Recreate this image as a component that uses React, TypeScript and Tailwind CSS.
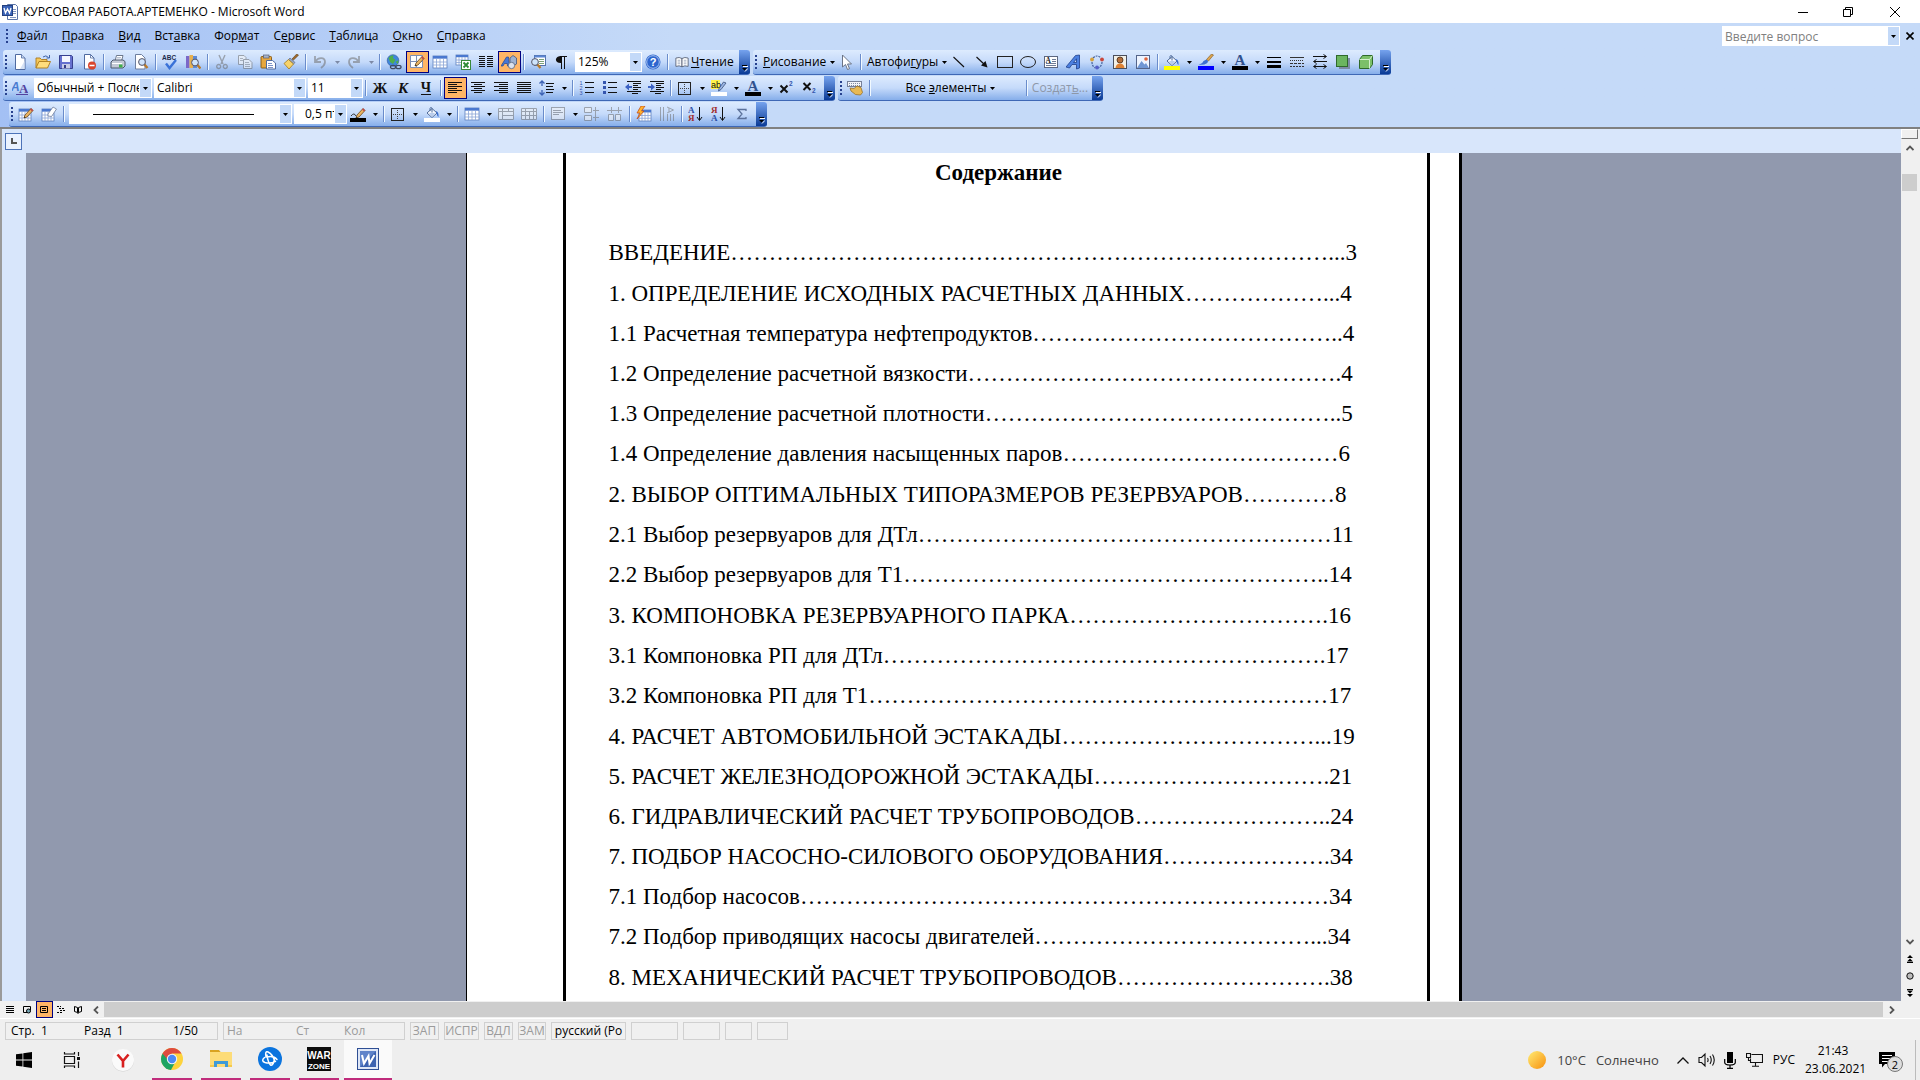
import React from "react";
import type { ReactNode } from "react";

/* ---------- icon primitives ---------- */

function Svg({ children, dim, size = 16 }: { children: ReactNode; dim?: boolean; size?: number }) {
  return (
    <svg width={size} height={size} viewBox="0 0 16 16" fill="none" aria-hidden="true" className={dim ? "shrink-0 opacity-55 grayscale" : "shrink-0"}>
      {children}
    </svg>
  );
}

const Grid = ({ x = 1, y = 2, w = 14, h = 12 }: { x?: number; y?: number; w?: number; h?: number }) => (
  <g>
    <rect x={x} y={y} width={w} height={h} fill="#fff" stroke="#5d7fbd" strokeWidth="0.8" />
    <rect x={x} y={y} width={w} height={h / 4.5} fill="#4a78cf" />
    <path
      d={`M${x} ${y + h * 0.5}h${w}M${x} ${y + h * 0.75}h${w}M${x + w / 4} ${y + 2}v${h - 2}M${x + w / 2} ${y + 2}v${h - 2}M${x + (w * 3) / 4} ${y + 2}v${h - 2}`}
      stroke="#8ba5d6"
      strokeWidth="0.8"
    />
  </g>
);

const Pencil = () => (
  <g>
    <path d="M6 12l1-3 6-6.5 2 2L9 11z" fill="#eab464" stroke="#6b4a1f" strokeWidth="0.8" />
    <path d="M12 3.500l2 2 1.200-1.200-2-2z" fill="#c04a4a" />
    <path d="M6 12l.5-1.500 1 1z" fill="#222" />
  </g>
);

const Lens = ({ x = 9, y = 8 }: { x?: number; y?: number }) => (
  <g>
    <path d={`M${x + 2} ${y + 2}l3.500 4`} stroke="#b87a2a" strokeWidth="2.400" />
    <circle cx={x} cy={y} r="3.400" fill="#cfe4fb" stroke="#556" strokeWidth="1" />
  </g>
);

const Bucket = () => (
  <g>
    <path d="M3 7l5-4.500 5 4.500-5 4.500z" fill="#f4f8ff" stroke="#4e6a98" strokeWidth="1" />
    <path d="M5 7l6 0-3 4z" fill="#b9cdec" />
    <path d="M6 5V2.500q1-2.500 2 0v4" stroke="#4e6a98" strokeWidth="1" />
    <path d="M12 5q3 1 2.500 6-1.500-1-2-4z" fill="#3a6fd0" />
  </g>
);

const I: Record<string, ReactNode> = {
  newDoc: (
    <>
      <path d="M3.500.5h6l3.500 3.500v11.500H3.500z" fill="#fff" stroke="#4f6aa0" strokeWidth="1" />
      <path d="M9.500.5v3.500h3.500" fill="#c7d8f2" stroke="#4f6aa0" strokeWidth="0.8" />
      <path d="M8 15h4.500V7z" fill="#d5e2f6" />
    </>
  ),
  open: (
    <>
      <path d="M1 14V4h4l1.500 1.500H12V8" fill="#f6c85a" stroke="#a9781c" strokeWidth="0.9" />
      <path d="M1 14L4 7.500h11.500L12.500 14z" fill="#ffdd7d" stroke="#a9781c" strokeWidth="0.9" />
      <path d="M8 3q3-2.500 5.500.500M14.500 1v3h-3" stroke="#3f63a8" strokeWidth="1" />
    </>
  ),
  save: (
    <>
      <path d="M1.500 1.500h12l1 1v12h-13z" fill="#6671cf" stroke="#37408f" strokeWidth="1" />
      <rect x="4" y="2" width="8" height="6" fill="#f4f6ff" />
      <rect x="4" y="10" width="8" height="4.500" fill="#c9cde6" />
      <rect x="6" y="11" width="2" height="3" fill="#343c87" />
    </>
  ),
  perm: (
    <>
      <path d="M3.500.5h6l3.500 3.500v11H3.500z" fill="#fff" stroke="#4f6aa0" strokeWidth="1" />
      <path d="M9.500.5v3.500h3.500" stroke="#4f6aa0" strokeWidth="0.8" />
      <circle cx="11" cy="11.500" r="4" fill="#d8452e" />
      <path d="M8.500 11.500h5" stroke="#fff" strokeWidth="1.600" />
    </>
  ),
  print: (
    <>
      <path d="M5 7L6.500 1.500H13L11.500 7z" fill="#fff" stroke="#5f6b80" strokeWidth="0.9" />
      <path d="M1 8l2-2h10l2 1.500V12l-2 2H1z" fill="#c4cad6" stroke="#4d586c" strokeWidth="1" />
      <path d="M2 9.500h10" stroke="#fff" />
      <rect x="9" y="10.500" width="3.500" height="3" fill="#3fae49" />
      <path d="M7 3.500h4M6.600 5h4" stroke="#9aa7bf" strokeWidth="0.7" />
    </>
  ),
  preview: (
    <>
      <path d="M2.500.5h6l3.500 3.500v11H2.500z" fill="#fff" stroke="#6d7f9f" strokeWidth="1" />
      <Lens />
    </>
  ),
  spell: (
    <>
      <text x="0" y="5.500" fontSize="6.500" fontWeight="bold" fontFamily="Liberation Sans" fill="#1d2c4c">ABC</text>
      <path d="M4 9.500l3.500 4.500L14 6" stroke="#3a72d8" strokeWidth="2.400" />
    </>
  ),
  research: (
    <>
      <rect x="1" y="2" width="3.500" height="12" fill="#7b68c8" />
      <rect x="4.500" y="1" width="3.500" height="13" fill="#e6b04f" />
      <rect x="8" y="2" width="4" height="12" fill="#5c8ad6" />
      <Lens x={10} y={8.500} />
    </>
  ),
  cut: <path d="M5 1l4 9M11 1L7 10M5 10.500a2 2 0 1 0 1 3.500 2 2 0 0 0-1-3.500M11 10.500a2 2 0 1 1-1 3.500 2 2 0 0 1 1-3.500" stroke="#5a6f9c" strokeWidth="1.400" />,
  copy: (
    <>
      <path d="M1.500 1.500h5.500l2 2v7H1.500z" fill="#f2f6ff" stroke="#5a6f9c" />
      <path d="M6.500 5.500h5.500l3 3v6H6.500z" fill="#f2f6ff" stroke="#5a6f9c" />
      <path d="M8 8.500h4M8 10.500h5M8 12.500h5M3 4.500h3M3 6.500h3" stroke="#7c8fb8" />
    </>
  ),
  paste: (
    <>
      <rect x="1" y="2.500" width="10.500" height="11.500" rx="0.800" fill="#e6a740" stroke="#85570f" strokeWidth="0.9" />
      <rect x="3.500" y="1" width="5.500" height="3" fill="#a9b3c6" stroke="#55607a" strokeWidth="0.7" />
      <path d="M6.500 6.500h6l3 2.500v6H6.500z" fill="#fff" stroke="#4f6aa0" strokeWidth="1" />
      <path d="M8 9.500h4M8 11.500h5M8 13.500h5" stroke="#7c93c8" />
    </>
  ),
  painter: (
    <>
      <path d="M15.500 1.200L10.500 6l-1.500-1L13.700 0z" fill="#a06a2c" stroke="#5d3c12" strokeWidth="0.6" />
      <path d="M7 4l5 4.500-1.500 1.500-5-4.500z" fill="#9aa8c4" stroke="#4c5a7c" strokeWidth="0.6" />
      <path d="M5.500 5.500l5 4.500L6 15 1 9.500z" fill="#f7d36b" stroke="#a27a1d" strokeWidth="0.8" />
    </>
  ),
  undo: <path d="M3 2v6h6M3.500 7.500C6 3 13 3 13 8c0 3-2 4.500-4 6" stroke="#5673ac" strokeWidth="1.800" />,
  redo: <path d="M13 2v6H7M12.500 7.500C10 3 3 3 3 8c0 3 2 4.500 4 6" stroke="#5673ac" strokeWidth="1.800" />,
  link: (
    <>
      <circle cx="7" cy="6.500" r="5.800" fill="#3f86dc" stroke="#2b5597" strokeWidth="0.6" />
      <path d="M2.500 4q2-3 5-2.800L7 4l2.500 2-2.500 4-3-2zM9.500 8l3-2-.5 4z" fill="#4fae4c" />
      <ellipse cx="7" cy="13" rx="2.600" ry="1.700" stroke="#3e4a62" strokeWidth="1.200" />
      <ellipse cx="12.500" cy="13" rx="2.600" ry="1.700" stroke="#3e4a62" strokeWidth="1.200" />
    </>
  ),
  drawTable: (
    <>
      <path d="M1.500 1.500h12v12h-12zM7.500 1.500v12M1.500 7.500h12" fill="#fff" stroke="#7d8fb5" />
      <Pencil />
    </>
  ),
  grid: <Grid />,
  excel: (
    <>
      <Grid w={12} h={10} y={1} />
      <rect x="6.500" y="6.500" width="9" height="9" fill="#fff" stroke="#3a8a3a" />
      <path d="M8.500 8.500l5 5M13.500 8.500l-5 5" stroke="#2d8a35" strokeWidth="1.800" />
    </>
  ),
  columns: <path d="M1 2.500h6M1 4.500h6M1 6.500h6M1 8.500h6M1 10.500h6M1 12.500h6M9 2.500h6M9 4.500h6M9 6.500h6M9 8.500h6M9 10.500h6M9 12.500h6" stroke="#111" />,
  drawing: (
    <>
      <path d="M9 4l3-2.500L15.500 4v6l-3.500 2-3-2z" fill="#9fb3d3" stroke="#41557d" strokeWidth="0.8" />
      <path d="M0 12L5.500 3h2l1 9H6.500L6.300 9.500H3.500L2 12z" fill="#4777d6" stroke="#24458f" strokeWidth="0.7" />
      <circle cx="10.500" cy="11.500" r="3.200" fill="#dbe2ee" stroke="#56637e" strokeWidth="0.8" />
    </>
  ),
  docMap: (
    <>
      <rect x="4.500" y="1.500" width="11" height="10" fill="#fff" stroke="#5573aa" />
      <rect x="4.500" y="1.500" width="11" height="2" fill="#5a86d4" />
      <path d="M9 5.500h5M9 7.500h5M9 9.500h5" stroke="#7ca27a" />
      <Lens x={5} y={8} />
    </>
  ),
  pilcrow: (
    <>
      <path d="M8.500 15V2.500M11.500 15V2.500M14 2.500H7" stroke="#111" />
      <path d="M8.500 2v7C1 9.500 1 2 8.500 2z" fill="#111" />
    </>
  ),
  help: (
    <>
      <circle cx="8" cy="8" r="7.500" fill="#2d66cf" />
      <circle cx="8" cy="8" r="6.300" stroke="#c9dbf7" strokeWidth="0.800" />
      <text x="8" y="12" textAnchor="middle" fontSize="11" fontWeight="bold" fontFamily="Liberation Sans" fill="#fff">?</text>
    </>
  ),
  book: (
    <>
      <path d="M8 4Q5 2 1 3.500V13q4-1.500 7 .5z" fill="#fff" stroke="#555f75" />
      <path d="M8 4q3-2 7-.5V13q-4-1.500-7 .5z" fill="#fff" stroke="#555f75" />
      <path d="M3 6h3M3 8h3M3 10h3M10 6h3M10 8h3M10 10h3" stroke="#8390aa" strokeWidth="0.8" />
    </>
  ),
  cursor: <path d="M4.500 1v12l3-2.500 2 5 2-.8-2-4.700h4z" fill="#fff" stroke="#6b7486" strokeWidth="1" />,
  line: <path d="M2.500 3L13 13" stroke="#111" strokeWidth="1.100" />,
  arrow: (
    <>
      <path d="M2.500 3L11 11" stroke="#111" strokeWidth="1.100" />
      <path d="M13.500 13.500L11.500 7 7 11.500z" fill="#111" />
    </>
  ),
  rect: <rect x="0.500" y="2.500" width="15" height="11" stroke="#222" />,
  ellipse: <ellipse cx="8" cy="8" rx="7.500" ry="5.500" stroke="#222" />,
  textBox: (
    <>
      <rect x="1.500" y="2.500" width="13" height="11" fill="#fff" stroke="#5c6780" />
      <text x="2.500" y="9" fontSize="7.500" fontWeight="bold" fontFamily="Liberation Serif" fill="#222">A</text>
      <path d="M9 5.500h4M9 7.500h4M3 9.500h10M3 11.500h10" stroke="#6e7c97" />
    </>
  ),
  wordArt: <path d="M0 13L9.500 1.500l4-.5V14l-3 1V10.500H6l-2.500 3.500zM7.500 8.500H10.500V4.800z" fill="#4c80e0" stroke="#1e3f8c" strokeWidth="0.8" fillRule="evenodd" />,
  diagram: (
    <>
      <path d="M4 4q4-4 8 0M13 8q0 4-4 6M3 8q0 4 3 6" stroke="#44619c" strokeWidth="1.200" strokeDasharray="2 1" />
      <circle cx="3" cy="5.500" r="1.900" fill="#d7a13c" />
      <circle cx="13" cy="5.500" r="1.900" fill="#c8473b" />
      <circle cx="8" cy="13.500" r="1.900" fill="#5560c8" />
    </>
  ),
  clipArt: (
    <>
      <rect x="1.500" y="1.500" width="13" height="13" fill="#f3f0e6" stroke="#4b4f5c" />
      <circle cx="8" cy="6" r="3" fill="#b5703c" stroke="#472b15" strokeWidth="0.8" />
      <path d="M3.500 14q.5-4.500 4.500-4.500t4.500 4.500z" fill="#df8233" />
    </>
  ),
  picture: (
    <>
      <rect x="1.500" y="1.500" width="13" height="13" fill="#eef4ff" stroke="#54648a" />
      <path d="M2 14L6.500 7l3 3.500L11 9l3 5z" fill="#6f96d4" />
      <circle cx="11" cy="5" r="1.800" fill="#e0643c" />
    </>
  ),
  bucketYellow: <><Bucket /><rect x="0" y="12" width="16" height="4" fill="#ff0" /></>,
  bucketWhite: <><Bucket /><rect x="0" y="12" width="16" height="4" fill="#fff" /></>,
  brush: (
    <>
      <path d="M15.500 1L10.500 7l-2-1.500L13.500 0z" fill="#dda54e" stroke="#7f581d" strokeWidth="0.6" />
      <path d="M8.500 5.500q3 2 0 4-3 2-8 1 4-1 5-3.500z" fill="#3d6fd0" />
      <rect x="0" y="12" width="16" height="4" fill="#00f" />
    </>
  ),
  fontA: (
    <>
      <text x="8" y="11" textAnchor="middle" fontSize="15" fontWeight="bold" fontFamily="Liberation Serif" fill="#31528f">A</text>
      <rect x="0" y="12" width="16" height="4" fill="#000" />
    </>
  ),
  weights: <path d="M1 3h14v1H1zM1 7h14v2H1zM1 11h14v3H1z" fill="#000" />,
  dashes: (
    <>
      <path d="M1 3.500h14" stroke="#333" />
      <path d="M1 6.500h14" stroke="#333" strokeDasharray="1 1" />
      <path d="M1 9.500h14" stroke="#333" strokeDasharray="3 1" />
      <path d="M1 12.500h14" stroke="#333" strokeDasharray="2 1" />
    </>
  ),
  arrows: <path d="M1 2.500h13M11.500.5l3 2-3 2M15 7.500H2M4.500 5.500l-3 2 3 2M2 12.500h12M4.500 10.500l-3 2 3 2M11.500 10.500l3 2-3 2" stroke="#111" />,
  shadow: (
    <>
      <rect x="4" y="4" width="11" height="11" fill="#7c8aa5" />
      <rect x="1.500" y="1.500" width="11" height="11" fill="#6bb55f" stroke="#2f6a2b" />
    </>
  ),
  cube: (
    <>
      <path d="M1.500 5.500l3-4h10v9l-3 4h-10z" fill="#7cc069" stroke="#2f6a2b" />
      <path d="M1.500 5.500h10v9M11.500 5.500l3-4" stroke="#d5f0cc" />
    </>
  ),
  styles: (
    <>
      <text x="-1" y="11" fontSize="12" fontWeight="bold" fontStyle="italic" fontFamily="Liberation Sans" fill="#4a7bd0">A</text>
      <text x="7" y="13" fontSize="13" fontWeight="bold" fontFamily="Liberation Serif" fill="#52439f">A</text>
      <path d="M4 14.500h12" stroke="#52439f" />
    </>
  ),
  bold: <text x="8" y="13" textAnchor="middle" fontSize="15" fontWeight="bold" fontFamily="Liberation Serif" fill="#111">Ж</text>,
  italic: <text x="8" y="13" textAnchor="middle" fontSize="15" fontWeight="bold" fontStyle="italic" fontFamily="Liberation Serif" fill="#111">К</text>,
  under: (
    <>
      <text x="8" y="12" textAnchor="middle" fontSize="14" fontWeight="bold" fontFamily="Liberation Serif" fill="#111">Ч</text>
      <path d="M3 14.500h10" stroke="#111" />
    </>
  ),
  left: <path d="M1 2.500h14M1 4.500h9M1 6.500h14M1 8.500h9M1 10.500h14M1 12.500h9" stroke="#111" />,
  center: <path d="M1 2.500h14M4 4.500h8M1 6.500h14M4 8.500h8M1 10.500h14M4 12.500h8" stroke="#111" />,
  right: <path d="M1 2.500h14M6 4.500h9M1 6.500h14M6 8.500h9M1 10.500h14M6 12.500h9" stroke="#111" />,
  justify: <path d="M1 2.500h14M1 4.500h14M1 6.500h14M1 8.500h14M1 10.500h14M1 12.500h14" stroke="#111" />,
  spacing: (
    <>
      <path d="M7 3.500h8M7 6.500h7M7 9.500h8M7 12.500h7" stroke="#111" />
      <path d="M3 1v5M3 10v5M.5 3.500L3 1l2.500 2.500M.5 12.500L3 15l2.500-2.500" stroke="#3c62b4" strokeWidth="1.300" />
    </>
  ),
  numbers: (
    <>
      <path d="M6 2.500h9M6 7.500h9M6 12.500h9" stroke="#111" />
      <text x="0.500" y="5" fontSize="5.500" fontFamily="Liberation Sans" fill="#3455ae">1</text>
      <text x="0.500" y="10" fontSize="5.500" fontFamily="Liberation Sans" fill="#3455ae">2</text>
      <text x="0.500" y="15" fontSize="5.500" fontFamily="Liberation Sans" fill="#3455ae">3</text>
    </>
  ),
  bullets: (
    <>
      <path d="M6 2.500h9M6 7.500h9M6 12.500h9" stroke="#111" />
      <path d="M1 1h3v3H1zM1 6h3v3H1zM1 11h3v3H1z" fill="#3455ae" />
    </>
  ),
  outdent: (
    <>
      <path d="M2 1.500h14M8 3.500h8M8 5.500h5M8 7.500h8M8 9.500h5M2 11.500h14M7 13.500h6" stroke="#111" />
      <path d="M0 7l4-3.500v2.500h3v2H4v2.500z" fill="#3c62c4" />
    </>
  ),
  indent: (
    <>
      <path d="M2 1.500h14M8 3.500h8M8 5.500h5M8 7.500h8M8 9.500h5M2 11.500h14M7 13.500h6" stroke="#111" />
      <path d="M7 7L3 3.500v2.500H0v2h3v2.500z" fill="#3c62c4" />
    </>
  ),
  border: (
    <>
      <rect x="1.500" y="2.500" width="12" height="12" stroke="#222" />
      <path d="M7.500 4v10M3 8.500h10" stroke="#444" strokeDasharray="1 1" />
    </>
  ),
  highlight: (
    <>
      <rect x="0" y="0" width="9" height="9" fill="#fff34a" />
      <text x="0" y="8" fontSize="9" fontFamily="Liberation Sans" fill="#111">ab</text>
      <path d="M15 3L10 9.500 7.500 11l.5-2.500L12.500 2z" fill="#9bb6e6" stroke="#3b5079" strokeWidth="0.8" />
      <rect x="0" y="12" width="16" height="4" fill="#fff" />
    </>
  ),
  sup: (
    <>
      <path d="M1.500 5.500l7 7M8.500 5.500l-7 7" stroke="#111" strokeWidth="2" />
      <text x="10" y="5.500" fontSize="6.500" fontWeight="bold" fontFamily="Liberation Sans" fill="#3455ae">2</text>
    </>
  ),
  sub: (
    <>
      <path d="M1.500 3l7 7M8.500 3l-7 7" stroke="#111" strokeWidth="2" />
      <text x="10" y="13" fontSize="6.500" fontWeight="bold" fontFamily="Liberation Sans" fill="#3455ae">2</text>
    </>
  ),
  hand: (
    <>
      <rect x="0.500" y="1.500" width="14" height="5" fill="#f2f4fa" stroke="#76819a" />
      <path d="M2 3.500h11M2 5.500h11" stroke="#66728e" strokeDasharray="1 1" strokeWidth="0.8" />
      <path d="M3 8l4 .5 3-2.500 4 1.500 1.500 5-2 2.500-5-.5L4 11z" fill="#e8b954" stroke="#94671b" strokeWidth="0.7" />
    </>
  ),
  pencilTable: <><Grid y={3} w={12} /><Pencil /></>,
  eraser: (
    <>
      <Grid y={3} w={12} />
      <path d="M7 8l5-7 3.500 2-5 7.500-3.500-.5z" fill="#fff" stroke="#71809e" strokeWidth="0.8" />
    </>
  ),
  penColor: (
    <>
      <path d="M1 10q3-4 5 0" stroke="#333" />
      <Pencil />
      <rect x="0" y="12" width="16" height="4" fill="#000" />
    </>
  ),
  merge: <path d="M.5 2.500h15v11H.5zM.5 5.500h15M4.500 2.500v11M10.500 2.500v3M4.500 9.500h11" fill="#eef3fb" stroke="#5d7298" />,
  split: <path d="M.5 2.500h15v11H.5zM.5 5.500h15M.5 9.500h15M4.500 2.500v11M8.500 5.500v8M12.500 2.500v11" fill="#eef3fb" stroke="#5d7298" />,
  cellAlign: (
    <>
      <rect x="1.500" y="1.500" width="13" height="12" fill="#eef3fb" stroke="#5d7298" />
      <path d="M3 4.500h8M3 6.500h10M3 8.500h6" stroke="#5d7298" />
    </>
  ),
  distRows: <path d="M.5 1.500h7v5h-7zM.5 9.500h7v5h-7zM9 4.500h6M9 11.500h6M11.500 1v14" stroke="#5d7298" fill="#eef3fb" />,
  distCols: <path d="M1.500 8.500h5v6h-5zM8.500 8.500h5v6h-5zM0 4.500h15M4.500 1v6M11.500 1v6" stroke="#5d7298" fill="#eef3fb" />,
  autoFormat: (
    <>
      <Grid x={3} y={4} w={12} h={11} />
      <path d="M5 0L1 7h3l-3 6 7-8H5.500L9 0z" fill="#ffb52e" stroke="#c1440e" strokeWidth="0.7" />
    </>
  ),
  textDir: (
    <>
      <path d="M1.500 1v14M4.500 1v14M8.500 8v7M11.500 8v7M14.500 8v7" stroke="#5d7298" />
      <path d="M8 1l6.500 3L8 7M10 2v4" stroke="#5d7298" />
    </>
  ),
  sortAZ: (
    <>
      <text x="0" y="7" fontSize="9" fontWeight="bold" fontFamily="Liberation Serif" fill="#2c4fa5">А</text>
      <text x="0" y="15" fontSize="9" fontWeight="bold" fontFamily="Liberation Serif" fill="#a32d2d">Я</text>
      <path d="M11.500 1v13M9 11l2.500 3.500L14 11" stroke="#111" />
    </>
  ),
  sortZA: (
    <>
      <text x="0" y="7" fontSize="9" fontWeight="bold" fontFamily="Liberation Serif" fill="#a32d2d">Я</text>
      <text x="0" y="15" fontSize="9" fontWeight="bold" fontFamily="Liberation Serif" fill="#2c4fa5">А</text>
      <path d="M11.500 1v13M9 11l2.500 3.500L14 11" stroke="#111" />
    </>
  ),
  sigma: <path d="M12 5V3.500H4L8 8l-4 4.500h8V11" stroke="#5b719a" strokeWidth="1.300" />,
};

/* ---------- toolbar parts ---------- */

function Btn({ icon, label, on, dim }: { icon: string; label: string; on?: boolean; dim?: boolean }) {
  return (
    <button
      type="button"
      aria-label={label}
      title={label}
      aria-pressed={on}
      className={
        on
          ? "flex h-[22px] w-[23px] shrink-0 items-center border border-[#000080] bg-[#ffb566] pl-[2px]"
          : "flex h-[22px] w-[23px] shrink-0 items-center pl-[3px] hover:bg-[#ffe3b0]"
      }
    >
      <Svg dim={dim}>{I[icon]}</Svg>
    </button>
  );
}

function Caret({ dim }: { dim?: boolean }) {
  return (
    <svg width="5" height="3" viewBox="0 0 5 3" className="shrink-0" aria-hidden="true">
      <path d="M0 0h5L2.500 3z" fill={dim ? "#7d8aa6" : "#000"} />
    </svg>
  );
}

function Drop({ label, dim }: { label: string; dim?: boolean }) {
  return (
    <button type="button" aria-label={label} className="flex h-[22px] w-[11px] shrink-0 items-center justify-center">
      <Caret dim={dim} />
    </button>
  );
}

function Sep() {
  return (
    <span className="flex w-[6px] shrink-0 justify-center">
      <span className="h-4 w-px bg-[#6a8ccb]" />
      <span className="h-4 w-px bg-[#f1f9ff]" />
    </span>
  );
}

function Combo({ label, width, pad = "pl-[2px]", options }: { label: string; width: string; pad?: string; options: string[] }) {
  return (
    <span className={`relative ml-[2px] flex h-5 shrink-0 border border-white bg-white ${width}`}>
      <select
        aria-label={label}
        className={`h-full w-full appearance-none overflow-hidden bg-transparent pr-3 text-[12px] leading-4 outline-none ${pad}`}
      >
        {options.map((o) => (
          <option key={o}>{o}</option>
        ))}
      </select>
      <span className="pointer-events-none absolute inset-y-0 right-0 flex w-[11px] items-center justify-center bg-[#c3d9f8]">
        <Caret />
      </span>
    </span>
  );
}

function Gripper() {
  return (
    <span className="flex w-[6px] shrink-0 flex-col items-center gap-[2px]">
      {[0, 1, 2, 3].map((n) => (
        <span key={n} className="size-[2px] bg-[#27418e]" />
      ))}
    </span>
  );
}

function Toolbar({ name, children, inset }: { name: string; children: ReactNode; inset?: boolean }) {
  return (
    <div
      role="toolbar"
      aria-label={name}
      className={`${inset ? "ml-[6px]" : ""} mr-[3px] flex h-[25px] items-center overflow-hidden rounded-[3px] border-b border-[#3f68b5] bg-linear-to-b from-[#ddebfe] via-[#c5dafa] to-[#86aeea]`}
    >
      <Gripper />
      <div className="flex items-center pr-[2px]">{children}</div>
      <button
        type="button"
        aria-label={`${name}: параметры`}
        className="flex h-full w-[11px] shrink-0 items-end justify-center bg-linear-to-b from-[#76a3ee] to-[#083a96] pb-[2px]"
      >
        <svg width="7" height="7" viewBox="0 0 7 7" aria-hidden="true">
          <path d="M1 .5h5" stroke="#000" />
          <path d="M2 1.500h5" stroke="#fff" />
          <path d="M1 3h5L3.500 5.500z" fill="#000" />
          <path d="M4 6.500L6.800 3.500" stroke="#fff" />
        </svg>
      </button>
    </div>
  );
}

/* ---------- window chrome ---------- */

const menus: [string, string, string][] = [
  ["", "Ф", "айл"],
  ["", "П", "равка"],
  ["", "В", "ид"],
  ["Вст", "а", "вка"],
  ["Фор", "м", "ат"],
  ["С", "е", "рвис"],
  ["", "Т", "аблица"],
  ["", "О", "кно"],
  ["", "С", "правка"],
];

function WordIcon() {
  return (
    <svg width="16" height="16" viewBox="0 0 16 16" aria-hidden="true">
      <path d="M5.500.5h8l2 2v13h-10z" fill="#fff" stroke="#5a74a8" />
      <path d="M11 5.500h3M11 7.500h3M11 9.500h3M8 13.500h6" stroke="#8296c0" />
      <rect x="0.500" y="1.500" width="10" height="10" fill="#3a63b8" stroke="#23407f" />
      <path d="M2 4l1.500 5 2-4 2 4L9 4" fill="none" stroke="#fff" strokeWidth="1.300" />
    </svg>
  );
}

function TitleBar() {
  return (
    <header className="flex h-[23px] items-center bg-white pl-[2px]">
      <WordIcon />
      <h1 className="ml-[5px] flex-1 text-[12px] leading-4">КУРСОВАЯ РАБОТА.АРТЕМЕНКО - Microsoft Word</h1>
      <button type="button" aria-label="Свернуть" className="flex h-full w-[46px] items-center justify-center">
        <svg width="10" height="10" viewBox="0 0 10 10"><path d="M0 5.500h10" stroke="#000" /></svg>
      </button>
      <button type="button" aria-label="Восстановить" className="flex h-full w-[44px] items-center justify-center">
        <svg width="10" height="10" viewBox="0 0 10 10" fill="none"><path d="M.5 2.500h7v7h-7zM2.500 2.500v-2h7v7h-2" stroke="#000" /></svg>
      </button>
      <button type="button" aria-label="Закрыть" className="flex h-full w-[50px] items-center justify-center">
        <svg width="10" height="10" viewBox="0 0 10 10"><path d="M0 0l10 10M10 0L0 10" stroke="#000" /></svg>
      </button>
    </header>
  );
}

function MenuBar() {
  return (
    <nav aria-label="Главное меню" className="flex h-[26px] items-center pl-1">
      <Gripper />
      {menus.map(([a, b, c]) => (
        <button key={a + b + c} type="button" className="px-[7px] text-[12px] leading-4">
          {a}<u>{b}</u>{c}
        </button>
      ))}
      <span className="relative ml-auto flex h-5 w-[178px] border border-white bg-white">
        <input aria-label="Введите вопрос" placeholder="Введите вопрос" className="h-full w-full bg-transparent pl-[2px] text-[12px] outline-none placeholder:text-[#808080]" />
        <span className="pointer-events-none absolute inset-y-0 right-0 flex w-[11px] items-center justify-center bg-[#c3d9f8]"><Caret /></span>
      </span>
      <button type="button" aria-label="Закрыть документ" className="flex w-5 items-center justify-center">
        <svg width="8" height="8" viewBox="0 0 8 8"><path d="M.5.5l7 7M7.500.5l-7 7" stroke="#000" strokeWidth="1.600" /></svg>
      </button>
    </nav>
  );
}

function Toolbars() {
  return (
    <div className="flex flex-col gap-px pt-px pl-[3px]">
      <div className="flex">
        <Toolbar name="Стандартная">
          <Btn icon="newDoc" label="Создать" />
          <Btn icon="open" label="Открыть" />
          <Btn icon="save" label="Сохранить" />
          <Btn icon="perm" label="Разрешения" />
          <Sep />
          <Btn icon="print" label="Печать" />
          <Btn icon="preview" label="Просмотр" />
          <Sep />
          <Btn icon="spell" label="Правописание" />
          <Btn icon="research" label="Справочные материалы" />
          <Sep />
          <Btn icon="cut" label="Вырезать" dim />
          <Btn icon="copy" label="Копировать" dim />
          <Btn icon="paste" label="Вставить" />
          <Btn icon="painter" label="Формат по образцу" />
          <Sep />
          <Btn icon="undo" label="Отменить" dim />
          <Drop label="Список отмены" dim />
          <Btn icon="redo" label="Вернуть" dim />
          <Drop label="Список возврата" dim />
          <Sep />
          <Btn icon="link" label="Гиперссылка" />
          <Btn icon="drawTable" label="Таблицы и границы" on />
          <Btn icon="grid" label="Добавить таблицу" />
          <Btn icon="excel" label="Лист Excel" />
          <Btn icon="columns" label="Колонки" />
          <Btn icon="drawing" label="Рисование" on />
          <Sep />
          <Btn icon="docMap" label="Схема документа" />
          <Btn icon="pilcrow" label="Непечатаемые знаки" />
          <Combo label="Масштаб" width="w-[67px]" options={["125%"]} />
          <Btn icon="help" label="Справка" />
          <Sep />
          <button type="button" className="flex h-[22px] w-[66px] items-center gap-[2px] pl-1 text-[12px] leading-4">
            <Svg size={14}>{I.book}</Svg>
            <span><u>Ч</u>тение</span>
          </button>
        </Toolbar>
        <Toolbar name="Рисование">
          <button type="button" className="flex h-[22px] w-[76px] items-center gap-1 pl-1 text-[12px] leading-4">
            <span><u>Р</u>исование</span><Caret />
          </button>
          <Btn icon="cursor" label="Выбор объектов" />
          <Sep />
          <button type="button" className="flex h-[22px] w-[84px] items-center gap-1 pl-[3px] text-[12px] leading-4">
            <span>Автофи<u>г</u>уры</span><Caret />
          </button>
          <Btn icon="line" label="Линия" />
          <Btn icon="arrow" label="Стрелка" />
          <Btn icon="rect" label="Прямоугольник" />
          <Btn icon="ellipse" label="Овал" />
          <Btn icon="textBox" label="Надпись" />
          <Btn icon="wordArt" label="WordArt" />
          <Btn icon="diagram" label="Диаграмма" />
          <Btn icon="clipArt" label="Картинка" />
          <Btn icon="picture" label="Рисунок" />
          <Sep />
          <Btn icon="bucketYellow" label="Цвет заливки" />
          <Drop label="Цвета заливки" />
          <Btn icon="brush" label="Цвет линий" />
          <Drop label="Цвета линий" />
          <Btn icon="fontA" label="Цвет текста" />
          <Drop label="Цвета текста" />
          <Btn icon="weights" label="Тип линии" />
          <Btn icon="dashes" label="Тип штриха" />
          <Btn icon="arrows" label="Вид стрелки" />
          <Btn icon="shadow" label="Тень" />
          <Btn icon="cube" label="Объем" />
        </Toolbar>
      </div>
      <div className="flex">
        <Toolbar name="Форматирование">
          <Btn icon="styles" label="Стили и форматирование" />
          <Combo label="Стиль" width="w-[118px]" options={["Обычный + После"]} />
          <Combo label="Шрифт" width="w-[152px]" options={["Calibri"]} />
          <Combo label="Размер" width="w-[55px]" options={["11"]} />
          <Sep />
          <Btn icon="bold" label="Полужирный" />
          <Btn icon="italic" label="Курсив" />
          <Btn icon="under" label="Подчеркнутый" />
          <Sep />
          <Btn icon="left" label="По левому краю" on />
          <Btn icon="center" label="По центру" />
          <Btn icon="right" label="По правому краю" />
          <Btn icon="justify" label="По ширине" />
          <Btn icon="spacing" label="Междустрочный интервал" />
          <Drop label="Интервалы" />
          <Sep />
          <Btn icon="numbers" label="Нумерация" />
          <Btn icon="bullets" label="Маркеры" />
          <Btn icon="outdent" label="Уменьшить отступ" />
          <Btn icon="indent" label="Увеличить отступ" />
          <Sep />
          <Btn icon="border" label="Границы" />
          <Drop label="Виды границ" />
          <Btn icon="highlight" label="Выделение цветом" />
          <Drop label="Цвета выделения" />
          <Btn icon="fontA" label="Цвет шрифта" />
          <Drop label="Цвета шрифта" />
          <Btn icon="sup" label="Надстрочный" />
          <Btn icon="sub" label="Подстрочный" />
        </Toolbar>
        <Toolbar name="Автотекст">
          <Btn icon="hand" label="Автотекст" />
          <Sep />
          <button type="button" className="flex h-[22px] w-[151px] items-center justify-center gap-1 pl-1 text-[12px] leading-4">
            <span>Все <u>э</u>лементы</span><Caret />
          </button>
          <Sep />
          <button type="button" className="h-[22px] w-[60px] text-[12px] leading-4 text-[#8d97a8]">Создат<u>ь</u>...</button>
        </Toolbar>
      </div>
      <div className="flex">
        <Toolbar name="Таблицы и границы" inset>
          <Btn icon="pencilTable" label="Нарисовать таблицу" />
          <Btn icon="eraser" label="Ластик" />
          <Sep />
          <span className="relative ml-[2px] flex h-5 w-[223px] items-center bg-white">
            <select aria-label="Тип линии границы" className="h-full w-full appearance-none bg-transparent text-transparent">
              <option>—</option>
            </select>
            <span className="pointer-events-none absolute left-6 h-px w-[161px] bg-black" />
            <span className="pointer-events-none absolute inset-y-px right-px flex w-[11px] items-center justify-center bg-[#c3d9f8]"><Caret /></span>
          </span>
          <Combo label="Толщина линии" width="w-[53px]" pad="pl-[10px]" options={["0,5 пт"]} />
          <Btn icon="penColor" label="Цвет границы" />
          <Drop label="Цвета границы" />
          <Sep />
          <Btn icon="border" label="Внешние границы" />
          <Drop label="Виды внешних границ" />
          <Btn icon="bucketWhite" label="Заливка" />
          <Drop label="Цвета ячеек" />
          <Sep />
          <Btn icon="grid" label="Вставить таблицу" />
          <Drop label="Вставка" />
          <Btn icon="merge" label="Объединить ячейки" dim />
          <Btn icon="split" label="Разбить ячейки" dim />
          <Sep />
          <Btn icon="cellAlign" label="Выравнивание" dim />
          <Drop label="Виды выравнивания" />
          <Btn icon="distRows" label="Выровнять строки" dim />
          <Btn icon="distCols" label="Выровнять столбцы" dim />
          <Sep />
          <Btn icon="autoFormat" label="Автоформат" />
          <Btn icon="textDir" label="Направление текста" dim />
          <Sep />
          <Btn icon="sortAZ" label="По возрастанию" />
          <Btn icon="sortZA" label="По убыванию" />
          <Btn icon="sigma" label="Автосумма" />
        </Toolbar>
      </div>
    </div>
  );
}

/* ---------- document ---------- */

type Entry = { title: string; dots: number; tail: string; page: string; lead?: boolean };

const toc: Entry[] = [
  { title: "ВВЕДЕНИЕ", dots: 26, tail: "...", page: "3" },
  { title: "1. ОПРЕДЕЛЕНИЕ ИСХОДНЫХ РАСЧЕТНЫХ ДАННЫХ", dots: 6, tail: "...", page: "4", lead: true },
  { title: "1.1 Расчетная температура нефтепродуктов", dots: 13, tail: "..", page: "4" },
  { title: "1.2 Определение расчетной вязкости", dots: 16, tail: ".", page: "4" },
  { title: "1.3 Определение расчетной плотности", dots: 15, tail: "..", page: "5" },
  { title: "1.4 Определение давления насыщенных паров", dots: 12, tail: "", page: "6" },
  { title: "2. ВЫБОР ОПТИМАЛЬНЫХ ТИПОРАЗМЕРОВ РЕЗЕРВУАРОВ", dots: 4, tail: "", page: "8", lead: true },
  { title: "2.1 Выбор резервуаров для ДТл", dots: 18, tail: "", page: "11" },
  { title: "2.2 Выбор резервуаров для Т1", dots: 18, tail: "..", page: "14" },
  { title: "3. КОМПОНОВКА РЕЗЕРВУАРНОГО ПАРКА", dots: 11, tail: ".", page: "16", lead: true },
  { title: "3.1 Компоновка РП для ДТл", dots: 19, tail: ".", page: "17" },
  { title: "3.2 Компоновка РП для Т1", dots: 20, tail: "", page: "17" },
  { title: "4. РАСЧЕТ АВТОМОБИЛЬНОЙ ЭСТАКАДЫ", dots: 11, tail: "...", page: "19", lead: true },
  { title: "5. РАСЧЕТ ЖЕЛЕЗНОДОРОЖНОЙ ЭСТАКАДЫ", dots: 10, tail: ".", page: "21" },
  { title: "6. ГИДРАВЛИЧЕСКИЙ РАСЧЕТ ТРУБОПРОВОДОВ", dots: 8, tail: "..", page: "24" },
  { title: "7. ПОДБОР НАСОСНО-СИЛОВОГО ОБОРУДОВАНИЯ", dots: 7, tail: ".", page: "34" },
  { title: "7.1 Подбор насосов", dots: 23, tail: "", page: "34" },
  { title: "7.2 Подбор приводящих насосы двигателей", dots: 12, tail: "...", page: "34" },
  { title: "8. МЕХАНИЧЕСКИЙ РАСЧЕТ ТРУБОПРОВОДОВ", dots: 9, tail: ".", page: "38", lead: true },
];

function DocumentPage() {
  return (
    <article className="mx-auto flex w-[996px] border-r-[3px] border-l border-black bg-white pr-[29px] pl-24 font-['Liberation_Serif','Times_New_Roman',serif] text-[23px] leading-10">
      <div className="flex-1 border-x-[3px] border-black pr-[38px] pl-[43px]">
        <h2 className="mb-10 text-center font-bold">Содержание</h2>
        <ol>
          {toc.map((e) => (
            <li key={e.title} className={e.lead ? "mt-px whitespace-nowrap" : "whitespace-nowrap"}>
              {e.title + "…".repeat(e.dots) + e.tail + e.page}
            </li>
          ))}
        </ol>
      </div>
    </article>
  );
}

function Chevron({ d }: { d: string }) {
  return (
    <svg width="8" height="8" viewBox="0 0 8 8" fill="none" aria-hidden="true">
      <path d={d} stroke="#555" strokeWidth="1.800" />
    </svg>
  );
}

function VerticalScroll() {
  return (
    <div className="flex w-[17px] shrink-0 flex-col items-center bg-[#f0f0f0]">
      <span className="h-[10px] w-full border border-t-white border-r-[#777] border-b-[#777] border-l-white" />
      <button type="button" aria-label="Вверх" className="flex h-[18px] w-full items-center justify-center"><Chevron d="M.5 6L4 2.500 7.500 6" /></button>
      <span className="mt-[17px] h-[17px] w-[15px] bg-[#cdcdcd]" />
      <button type="button" aria-label="Вниз" className="mt-auto flex h-[17px] w-full items-center justify-center"><Chevron d="M.5 2L4 5.500 7.500 2" /></button>
      <button type="button" aria-label="Предыдущая страница" className="flex h-[17px] w-full items-center justify-center">
        <svg width="6" height="8" viewBox="0 0 6 8"><path d="M3 0l3 3H0zM3 3.500l3 3H0zM0 7h6v1H0z" fill="#000" /></svg>
      </button>
      <button type="button" aria-label="Выбор объекта перехода" className="flex h-[17px] w-full items-center justify-center">
        <svg width="8" height="8" viewBox="0 0 8 8"><circle cx="4" cy="4" r="3.200" fill="#bbb" stroke="#111" /></svg>
      </button>
      <button type="button" aria-label="Следующая страница" className="flex h-[17px] w-full items-center justify-center">
        <svg width="6" height="8" viewBox="0 0 6 8"><path d="M3 8l3-3H0zM3 4.500l3-3H0zM0 0h6v1H0z" fill="#000" /></svg>
      </button>
    </div>
  );
}

const views: { label: string; icon: ReactNode; on?: boolean }[] = [
  { label: "Обычный режим", icon: <path d="M0 .5h8M0 2.500h8M0 4.500h8M0 6.500h8" stroke="#000" /> },
  { label: "Веб-документ", icon: <><path d="M7.500 4V.5h-7v6H4" stroke="#000" fill="none" /><circle cx="5.500" cy="5" r="2" fill="#7ab" stroke="#000" /></> },
  { label: "Разметка страницы", icon: <path d="M.5.5h7v6h-7zM2 2.500h4M2 4.500h4" stroke="#000" fill="none" />, on: true },
  { label: "Структура", icon: <path d="M0 .5h4M2 2.500h6M3 4.500h5M0 6.500h6" stroke="#000" strokeDasharray="2 1" /> },
  { label: "Режим чтения", icon: <path d="M.5.500l3 1v5l-3-1zM7.500.500l-3 1v5l3-1zM4 6v2" stroke="#000" fill="none" /> },
];

function HorizontalScroll() {
  return (
    <div className="flex h-[17px] items-center bg-[#f0f0f0] pr-[19px] pl-[2px]">
      {views.map((v) => (
        <button
          key={v.label}
          type="button"
          aria-label={v.label}
          aria-pressed={v.on}
          className={v.on ? "flex size-[17px] items-center border border-[#000080] bg-[#ffb566] pl-[3px]" : "flex size-[17px] items-center pl-1"}
        >
          <svg width="8" height="8" viewBox="0 0 8 8" aria-hidden="true">{v.icon}</svg>
        </button>
      ))}
      <button type="button" aria-label="Влево" className="flex h-4 w-[17px] items-center justify-center"><Chevron d="M6 .5L2.500 4 6 7.500" /></button>
      <span className="h-[15px] flex-1 bg-[#cdcdcd]" />
      <button type="button" aria-label="Вправо" className="flex h-4 w-[18px] items-center justify-center"><Chevron d="M2 .5L5.500 4 2 7.500" /></button>
    </div>
  );
}

const box = "flex h-[18px] items-center border border-[#d0d0d0] leading-4";

function StatusBar() {
  return (
    <div className="flex h-[22px] items-end gap-[5px] border-t border-white bg-[#f0f0f0] pl-[5px] text-[12px] text-[#9b9b9b]">
      <div className={`${box} w-[213px] pl-[5px] text-black`}>
        <span className="w-[73px]">Стр.&nbsp; 1</span>
        <span className="w-[89px]">Разд&nbsp; 1</span>
        <span>1/50</span>
      </div>
      <div className={`${box} w-[182px] pl-[3px]`}>
        <span className="w-[69px]">На</span>
        <span className="w-12">Ст</span>
        <span>Кол</span>
      </div>
      <div className={`${box} w-[29px] justify-center`}>ЗАП</div>
      <div className={`${box} w-[35px] justify-center`}>ИСПР</div>
      <div className={`${box} w-[29px] justify-center`}>ВДЛ</div>
      <div className={`${box} w-7 justify-center`}>ЗАМ</div>
      <div className={`${box} w-[75px] justify-center whitespace-nowrap text-black`}>русский (Ро</div>
      <div className={`${box} w-[47px]`} />
      <div className={`${box} w-[37px]`} />
      <div className={`${box} w-[27px]`} />
      <div className={`${box} w-[31px]`} />
    </div>
  );
}

/* ---------- taskbar ---------- */

function TaskButton({ label, children, active }: { label: string; children: ReactNode; active?: boolean }) {
  return (
    <button
      type="button"
      aria-label={label}
      className={
        active
          ? "-ml-1 flex h-full w-12 items-center justify-center border-b-2 border-[#c02c7c] bg-[#fafafa]"
          : "mr-[9px] flex h-full w-10 items-center justify-center border-b-2 border-[#c02c7c]"
      }
    >
      {children}
    </button>
  );
}

function Taskbar() {
  return (
    <footer className="flex h-10 items-center bg-[#eeeeee] text-[12px] leading-4">
      <button type="button" aria-label="Пуск" className="flex w-12 justify-center">
        <svg width="16" height="16" viewBox="0 0 16 16"><path d="M0 2.300L6.500 1.400V7.600H0zM7.300 1.300L16 0v7.600H7.300zM0 8.400h6.500v6.200L0 13.700zM7.300 8.400H16V16l-8.700-1.300z" fill="#000" /></svg>
      </button>
      <button type="button" aria-label="Представление задач" className="flex w-12 justify-center">
        <svg width="18" height="16" viewBox="0 0 18 16" fill="none" stroke="#111" strokeWidth="1.200"><path d="M1.500 4.500h10v7h-10zM1.500 0v2h10V0M1.500 16v-2h10v2M15.500 0v4M15.500 9.500V16" /><path d="M14 5h3v3h-3z" fill="#111" stroke="none" /></svg>
      </button>
      <button type="button" aria-label="Яндекс" className="mr-[5px] ml-[3px] flex w-12 justify-center">
        <svg width="24" height="24" viewBox="0 0 24 24"><circle cx="12" cy="12.500" r="11" fill="#cfcfcf" /><circle cx="12" cy="12" r="11" fill="#fafafa" /><path d="M6.500 6.500L12 13v6.500M17.500 6.500L12 13" fill="none" stroke="#d8201f" strokeWidth="2.600" /></svg>
      </button>
      <TaskButton label="Google Chrome">
        <svg width="24" height="24" viewBox="0 0 24 24">
          <circle cx="12" cy="12" r="11" fill="#fdd33c" />
          <path d="M12 12L2.500 6.500A11 11 0 0 0 11 23l4.500-8.500z" fill="#1da462" />
          <path d="M2.500 6.500A11 11 0 0 1 21.500 6.500H12L8 13z" fill="#dd4b3e" />
          <circle cx="12" cy="12" r="5.200" fill="#f5f5f5" />
          <circle cx="12" cy="12" r="4.200" fill="#4a8af4" />
        </svg>
      </TaskButton>
      <TaskButton label="Проводник">
        <svg width="22" height="20" viewBox="0 0 22 20"><path d="M0 1h9l2 2.500H0z" fill="#d9a320" /><path d="M0 3h22v15H0z" fill="#fddc78" /><path d="M4 18v-6h14v6h-3v-3H7v3z" fill="#3f9bd8" /><path d="M0 16h4v2H0zM18 16h4v2h-4z" fill="#f4c94c" /></svg>
      </TaskButton>
      <TaskButton label="Battle.net">
        <svg width="24" height="24" viewBox="0 0 24 24" fill="none"><circle cx="12" cy="12" r="12" fill="#0b74de" /><path d="M8 10c-1-4 0-6 2-5 3 1.500 5.500 5 6.500 8.500M6.500 10.500C4 12.500 4 14.500 7 15.500c3.500 1 7.500.5 10.500-1.200M9 8c.5 4 1.500 8 3.500 10 2 1 4-3 4-7.500M9 10c4-1 8 0 10 2.500" stroke="#fff" strokeWidth="1.500" strokeLinecap="round" /></svg>
      </TaskButton>
      <TaskButton label="Warzone">
        <svg width="24" height="24" viewBox="0 0 24 24"><rect width="24" height="24" fill="#0b0b0b" /><text x="12" y="11.500" textAnchor="middle" fontSize="10" fontWeight="bold" fontFamily="Liberation Sans" fill="#fff">WAR</text><text x="12" y="21.500" textAnchor="middle" fontSize="8" fontWeight="bold" fontFamily="Liberation Sans" fill="#fff">ZONE</text></svg>
      </TaskButton>
      <TaskButton label="Microsoft Word" active>
        <svg width="22" height="22" viewBox="0 0 22 22">
          <rect x="0.500" y="0.500" width="21" height="21" fill="#dfe7f6" stroke="#2f4f94" />
          <rect x="3" y="3" width="16" height="16" fill="#5f83c9" />
          <path d="M3 19L19 3v16z" fill="#3d63b0" />
          <path d="M5 7l2 8.500L11.500 8l1 7.500L17.500 7" fill="none" stroke="#fff" strokeWidth="2" />
        </svg>
      </TaskButton>
      <div className="ml-auto flex h-full items-center">
        <button type="button" className="flex items-center gap-[10px] text-[13px] text-[#444]">
          <svg width="20" height="20" viewBox="0 0 20 20" aria-hidden="true">
            <defs><linearGradient id="sun" x1="0" y1="0" x2="1" y2="1"><stop offset="0.100" stopColor="#ffe36a" /><stop offset="1" stopColor="#f78f0c" /></linearGradient></defs>
            <circle cx="10" cy="10" r="9" fill="url(#sun)" />
          </svg>
          <span>10°C</span>
          <span>Солнечно</span>
        </button>
        <button type="button" aria-label="Скрытые значки" className="ml-[18px] flex w-3 justify-center">
          <svg width="12" height="7" viewBox="0 0 12 7" fill="none"><path d="M.5 6.500l5.500-5.500 5.500 5.500" stroke="#111" strokeWidth="1.300" /></svg>
        </button>
        <button type="button" aria-label="Громкость" className="ml-[9px]">
          <svg width="18" height="16" viewBox="0 0 18 16" fill="none" stroke="#111" strokeWidth="1.100"><path d="M1 5.500h2.500L7 2v12L3.500 10.500H1zM9.500 6q1.200 2 0 4M12 4q2.500 4 0 8M14.500 2.500q3.500 5.500 0 11" /></svg>
        </button>
        <button type="button" aria-label="Микрофон" className="ml-2">
          <svg width="12" height="17" viewBox="0 0 12 17" fill="none"><rect x="3" y="0" width="6" height="11" fill="#000" /><path d="M.7 7v3.500q0 2.500 5.300 2.500t5.300-2.500V7M6 13v3.500M3 16.300h6" stroke="#000" strokeWidth="1.200" /></svg>
        </button>
        <button type="button" aria-label="Сеть" className="ml-[10px]">
          <svg width="17" height="14" viewBox="0 0 17 14" fill="none" stroke="#111" strokeWidth="1.100"><path d="M5.500 1.500h11v8h-12v-4M.5.500h4v4h-4zM2.500 4.500v3h2M9.500 9.500v3.500M6 13.300h7" /></svg>
        </button>
        <button type="button" className="ml-[10px]">РУС</button>
        <button type="button" className="ml-[10px] w-14 text-center leading-[18px]">21:43<br />23.06.2021</button>
        <button type="button" aria-label="Уведомления: 2" className="relative ml-[18px] h-6 w-6">
          <svg width="16" height="16" viewBox="0 0 16 16"><path d="M0 0h16v12H6l-3 3.500V12H0z" fill="#000" /><path d="M3 3.500h10M3 6.500h10M3 9.500h7" stroke="#fff" /></svg>
          <span className="absolute right-0 bottom-0 flex size-4 items-center justify-center rounded-full border border-[#777] bg-[#ddd] text-[11px] leading-none">2</span>
        </button>
        <span className="ml-3 h-full w-[5px] border-l border-[#bbb]" />
      </div>
    </footer>
  );
}

export default function App() {
  return (
    <div className="flex h-screen flex-col overflow-hidden bg-[#f0f0f0] font-['Open_Sans','Noto_Sans',sans-serif] text-black">
      <TitleBar />
      <div className="bg-linear-to-r from-[#a3c0f4] to-[#c5daf8] to-35%">
        <MenuBar />
        <Toolbars />
      </div>
      <div className="flex min-h-0 flex-1 border-t-2 border-[#808080] pr-[2px]">
        <div className="flex min-w-0 flex-1 border-l-2 border-[#9a9a9a]">
          <div className="flex min-w-0 flex-1 flex-col bg-[#d8e6fb]">
            <div className="flex h-6 shrink-0 items-center pl-[3px]">
              <button type="button" aria-label="Позиция табуляции" className="flex size-[17px] items-center justify-center border border-[#4d73b8] bg-[#eaf2ff]">
                <svg width="6" height="6" viewBox="0 0 6 6"><path d="M1 0v5h5" stroke="#555" strokeWidth="2" fill="none" /></svg>
              </button>
            </div>
            <main className="ml-6 flex min-h-0 flex-1 overflow-hidden bg-[#9199ae]">
              <DocumentPage />
            </main>
          </div>
          <VerticalScroll />
        </div>
      </div>
      <HorizontalScroll />
      <StatusBar />
      <Taskbar />
    </div>
  );
}
